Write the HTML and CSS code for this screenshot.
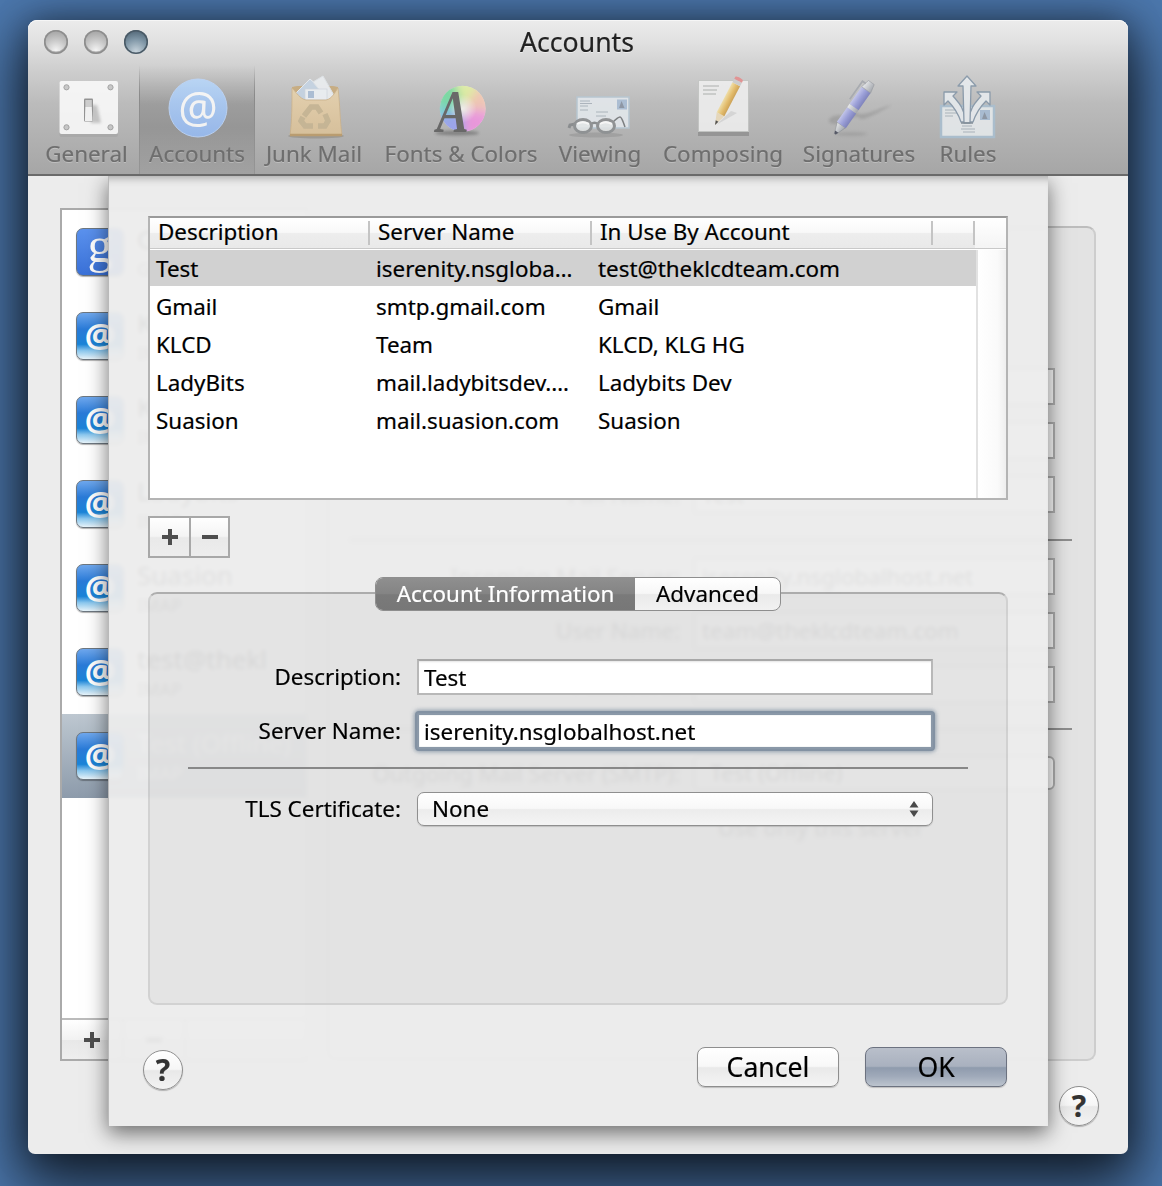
FILE: index.html
```html
<!DOCTYPE html>
<html lang="en">
<head>
<meta charset="utf-8">
<title>Accounts</title>
<link rel="stylesheet" href="styles.css">
</head>
<body>
<div class="window">
  <header class="toolbar">
    <div class="titlebar">
      <div class="lights"><span class="light"></span><span class="light"></span><span class="light light-active"></span></div>
      <div class="title">Accounts</div>
    </div>
    <nav class="tools">
      <div class="tool">
        <svg class="tool-icon" width="80" height="64" viewBox="0 0 80 64">
          <defs><filter id="sb" x="-50%" y="-50%" width="200%" height="200%"><feGaussianBlur stdDeviation="1.500"/></filter></defs>
          <rect x="12.500" y="7" width="58.500" height="55" rx="2" fill="#a8a8a8"/>
          <rect x="12.500" y="6" width="58.500" height="53" rx="2" fill="#fbfbfb"/>
          <g fill="#c9c9c9" stroke="#a0a0a0"><circle cx="19.500" cy="12.300" r="2.600"/><circle cx="63.500" cy="12.300" r="2.600"/><circle cx="19.500" cy="52.300" r="2.600"/><circle cx="63.500" cy="52.300" r="2.600"/></g>
          <path d="M42 30h8l4 18H44z" fill="#9a9a9a" opacity=".55" filter="url(#sb)"/>
          <rect x="37" y="23.500" width="9" height="23" rx="1" fill="#8e8e8e"/>
          <rect x="38.300" y="25" width="6.500" height="7" fill="#cfcfcf"/>
          <path d="M38.300 32h6.500l.7 14h-7.600z" fill="#f8f8f8"/>
        </svg>
        <span class="tool-label">General</span>
      </div>
      <div class="tool tool-on">
        <svg class="tool-icon" width="80" height="64" viewBox="0 0 80 64">
          <defs><linearGradient id="at" x1="0" y1="0" x2="0" y2="1"><stop offset="0" stop-color="#b8d8fc"/><stop offset="1" stop-color="#97bcf5"/></linearGradient></defs>
          <circle cx="41" cy="33" r="29" fill="url(#at)" stroke="#bcd6fb" stroke-width="1"/>
          <text class="svg-at" x="41" y="48" text-anchor="middle">@</text>
        </svg>
        <span class="tool-label">Accounts</span>
      </div>
      <div class="tool">
        <svg class="tool-icon" width="80" height="64" viewBox="0 0 80 64">
          <defs>
            <linearGradient id="bag" x1="0" y1="0" x2="0" y2="1"><stop offset="0" stop-color="#e8d3ad"/><stop offset="1" stop-color="#dcc298"/></linearGradient>
            <filter id="rb" x="-20%" y="-20%" width="140%" height="140%"><feGaussianBlur stdDeviation=".6"/></filter>
          </defs>
          <ellipse cx="42" cy="61" rx="28" ry="2.500" fill="#7d7668" opacity=".45"/>
          <path d="M18 12c6-2 40-2 46 0v15H18z" fill="#c8aa7b"/>
          <path d="M19 21L36 4l17 15-6 8H26z" fill="#c5d4e4" stroke="#e8edf2"/>
          <path d="M39 7L49 1l12 21-6 5z" fill="#eceff2" stroke="#dfe4e8"/>
          <rect x="31" y="14" width="22" height="11" fill="#eef2f6" stroke="#ced6df" stroke-width=".7"/>
          <rect x="34" y="16" width="6" height="7" fill="#a9bdd6"/>
          <path d="M18 13c4 4 8 11 14 12h20c6-1 9-8 12-12 2 16 2 34 4 47H16c2-13 2-31 2-47z" fill="url(#bag)" stroke="#cdb084" stroke-width=".8"/>
          <path d="M16 60h52" stroke="#bb9a68" stroke-width="2.500"/>
          <g fill="none" stroke="#c8b591" stroke-width="5.500" filter="url(#rb)"><path d="M30 41l7-9h6l4 6"/><path d="M51 39l3 7-3 5h-7"/><path d="M39 51h-8l-4-5 2-4"/></g>
        </svg>
        <span class="tool-label">Junk Mail</span>
      </div>
      <div class="tool">
        <svg class="tool-icon" width="80" height="64" viewBox="0 0 80 64">
          <defs>
            <clipPath id="wheel"><circle cx="41.700" cy="33.700" r="23"/></clipPath>
            <filter id="soft" x="-20%" y="-20%" width="140%" height="140%"><feGaussianBlur stdDeviation="5"/></filter>
            <filter id="soft2" x="-20%" y="-100%" width="140%" height="300%"><feGaussianBlur stdDeviation="1.500"/></filter>
            <radialGradient id="wc"><stop offset="0" stop-color="#fdfaf4" stop-opacity=".9"/><stop offset="1" stop-color="#fdfaf4" stop-opacity="0"/></radialGradient>
          </defs>
          <ellipse cx="36" cy="58" rx="22" ry="2.500" fill="#444" opacity=".5" filter="url(#soft2)"/>
          <g clip-path="url(#wheel)">
            <circle cx="41.700" cy="33.700" r="23" fill="#f2eee2"/>
            <g filter="url(#soft)">
              <path d="M42 34L14 30V6h20z" fill="#72dca0"/>
              <path d="M42 34L34 6h28z" fill="#e2f2a0"/>
              <path d="M42 34L62 6l10 30z" fill="#f6c6b2"/>
              <path d="M42 34l30 3-10 26H44z" fill="#f094e0"/>
              <path d="M42 34l2 29H18l-4-20z" fill="#98a2f2"/>
              <path d="M42 34L14 30v14z" fill="#6fd2d8"/>
            </g>
            <circle cx="41.700" cy="33.700" r="14" fill="url(#wc)"/>
          </g>
          <text class="svg-a" transform="translate(15.500 57) scale(.78 1)">A</text>
        </svg>
        <span class="tool-label">Fonts &amp; Colors</span>
      </div>
      <div class="tool">
        <svg class="tool-icon" width="80" height="64" viewBox="0 0 80 64">
          <ellipse cx="36" cy="60" rx="27" ry="2.500" fill="#6f6f6f" opacity=".3"/>
          <rect x="17" y="22" width="52" height="31" fill="#e4e9ed" stroke="#b6c7d4" stroke-width="1.500"/>
          <rect x="57" y="24.500" width="10" height="10" fill="#a9bed6"/>
          <path d="M59 33l2.500-7 3 7z" fill="#8893a2"/>
          <g stroke="#9aa6b0" stroke-width=".8"><path d="M20 26h10M20 28.500h12M20 31h8M20 35h8M36 37h12M36 41h10"/></g>
          <path d="M52 48c3-3 6-6 8-6s3 5 5 10" fill="none" stroke="#75787a" stroke-width="1.500"/>
          <path d="M15 49l-5 1-1 3" fill="none" stroke="#85888a" stroke-width="3"/>
          <path d="M31 49c2-1.500 5-1.500 7 0" fill="none" stroke="#85888a" stroke-width="2.500"/>
          <g fill="#e9ecec" fill-opacity=".85" stroke="#8b8e90" stroke-width="3"><ellipse cx="23" cy="51" rx="8.500" ry="6.500"/><ellipse cx="46" cy="51" rx="8.500" ry="6.500"/></g>
          <path d="M17 49c3-2 8-2 12 0M40 49c3-2 8-2 12 0" stroke="#fff" stroke-width="2" fill="none"/>
        </svg>
        <span class="tool-label">Viewing</span>
      </div>
      <div class="tool">
        <svg class="tool-icon" width="80" height="64" viewBox="0 0 80 64">
          <defs><linearGradient id="pc" x1="0" y1="0" x2="1" y2="0"><stop offset="0" stop-color="#f5e2a6"/><stop offset=".55" stop-color="#e9bd62"/><stop offset="1" stop-color="#cf9f4a"/></linearGradient></defs>
          <rect x="15" y="6" width="51" height="55" fill="#929292"/>
          <rect x="15.500" y="5.500" width="50" height="51" fill="#efefef" stroke="#c4c6c4"/>
          <g stroke="#a9adaa" stroke-width="1"><path d="M20 11h16M20 15h14M20 19h13"/></g>
          <path d="M33 50l15-14 6 2z" fill="#c9c9c9" opacity=".6"/>
          <g transform="rotate(27.500 32 50)">
            <path d="M32 50l-4.300-12h8.600z" fill="#ecdcbc"/>
            <path d="M32 50l-1.500-4.500h3z" fill="#444"/>
            <rect x="27.700" y="4" width="8.600" height="34" fill="url(#pc)"/>
            <rect x="27.700" y="0" width="8.600" height="4" fill="#cdcdcd"/>
            <path d="M27.700 0v-2c0-2 8.600-2 8.600 0v2z" fill="#e58d8d"/>
          </g>
        </svg>
        <span class="tool-label">Composing</span>
      </div>
      <div class="tool">
        <svg class="tool-icon" width="80" height="64" viewBox="0 0 80 64">
          <defs>
            <filter id="soft3" x="-20%" y="-60%" width="140%" height="220%"><feGaussianBlur stdDeviation="1.400"/></filter>
            <linearGradient id="penb" x1="0" y1="0" x2="1" y2="0"><stop offset="0" stop-color="#c4c7f0"/><stop offset=".5" stop-color="#979cdc"/><stop offset="1" stop-color="#777cbc"/></linearGradient>
            <linearGradient id="pens" x1="0" y1="0" x2="1" y2="0"><stop offset="0" stop-color="#eef0f2"/><stop offset="1" stop-color="#9fa3aa"/></linearGradient>
          </defs>
          <ellipse cx="32" cy="59" rx="16" ry="2" fill="#8a8a8a" opacity=".45" filter="url(#soft3)"/>
          <path d="M24 41c-6-2-13 1-14 4-1 4 7 5 12 3s8-5 14-6c5-1 4 3 8 2 8-2 18-8 29-14-10 2-20 8-29 9-6 1-7-3-11-3-4 0-5 3-9 5z" fill="#8b8b8b" opacity=".55" filter="url(#soft3)"/>
          <g transform="translate(16 59) rotate(35.200)">
            <path d="M-.8 0L-5 -11H5L.8 0z" fill="url(#pens)" stroke="#84878c" stroke-width=".5"/>
            <path d="M-.8 0L-2 -3H2L.8 0z" fill="#4a4d5c"/>
            <rect x="-5.500" y="-29" width="11" height="18" fill="url(#penb)"/>
            <rect x="-5.500" y="-33" width="11" height="4" fill="url(#pens)"/>
            <rect x="-5.500" y="-54" width="11" height="21" fill="url(#penb)"/>
            <path d="M-5.500 -54L-3.500 -63H3.500L5.500 -54z" fill="url(#pens)" stroke="#8b8e95" stroke-width=".5"/>
            <path d="M-4 -59h-4v22" fill="none" stroke="#a5a8ae" stroke-width="1.800"/>
          </g>
        </svg>
        <span class="tool-label">Signatures</span>
      </div>
      <div class="tool">
        <svg class="tool-icon" width="80" height="64" viewBox="0 0 80 64">
          <rect x="13" y="31" width="53" height="31" fill="#e6eaec" stroke="#a9bfd0" stroke-width="2.500"/>
          <rect x="52" y="35" width="10" height="10" fill="#a6bcd4"/>
          <path d="M54 44l2.500-7 3 7z" fill="#8893a2"/>
          <g stroke="#98a4ae" stroke-width=".8"><path d="M17 35h10M17 38h12M17 41h8M34 51h10M33 54h14M35 57h12"/></g>
          <g fill="#e8ecef" stroke="#8496a8" stroke-width="1.300" stroke-linejoin="round">
            <path d="M16 17h13l-4 4c5 6 11 11 13 26h-5c-3-9-8-16-13-21l-4 4z"/>
            <path d="M62 17H49l4 4c-5 6-11 11-13 26h5c3-9 8-16 13-21l4 4z"/>
            <path d="M39 1l9 10h-5l-1 37h-6l-1-37h-5z"/>
          </g>
          <path d="M33 48h12" stroke="#7d8994" stroke-width="1.500"/>
        </svg>
        <span class="tool-label">Rules</span>
      </div>
    </nav>
  </header>

  <main class="pane">
    <div class="rear">
      <div class="rear-list">
        <ul class="accounts">
          <li class="account"><span class="app-icon app-google"><svg width="48" height="48" viewBox="0 0 48 48"><text class="svg-g" x="24" y="34" text-anchor="middle">g</text></svg></span><span class="account-text"><b>Gmail</b><small>Google</small></span></li>
          <li class="account"><span class="app-icon"><svg width="48" height="48" viewBox="0 0 48 48"><text class="svg-at-small" x="24" y="36" text-anchor="middle">@</text></svg></span><span class="account-text"><b>KLCD</b><small>IMAP</small></span></li>
          <li class="account"><span class="app-icon"><svg width="48" height="48" viewBox="0 0 48 48"><text class="svg-at-small" x="24" y="36" text-anchor="middle">@</text></svg></span><span class="account-text"><b>KLG HG</b><small>IMAP</small></span></li>
          <li class="account"><span class="app-icon"><svg width="48" height="48" viewBox="0 0 48 48"><text class="svg-at-small" x="24" y="36" text-anchor="middle">@</text></svg></span><span class="account-text"><b>Ladybits</b><small>IMAP</small></span></li>
          <li class="account"><span class="app-icon"><svg width="48" height="48" viewBox="0 0 48 48"><text class="svg-at-small" x="24" y="36" text-anchor="middle">@</text></svg></span><span class="account-text"><b>Suasion</b><small>IMAP</small></span></li>
          <li class="account"><span class="app-icon"><svg width="48" height="48" viewBox="0 0 48 48"><text class="svg-at-small" x="24" y="36" text-anchor="middle">@</text></svg></span><span class="account-text"><b>test@thekl</b><small>IMAP</small></span></li>
          <li class="account account-on"><span class="app-icon"><svg width="48" height="48" viewBox="0 0 48 48"><text class="svg-at-small" x="24" y="36" text-anchor="middle">@</text></svg></span><span class="account-text"><b>Test (Offline)</b><small>IMAP</small></span></li>
        </ul>
        <div class="rear-actions"><span class="rear-action"><svg width="16" height="16" viewBox="0 0 16 16"><path d="M6 0h4v6h6v4h-6v6H6v-6H0V6h6z" fill="#4e4e4e"/></svg></span><span class="rear-action"><svg width="16" height="16" viewBox="0 0 16 16"><path d="M0 6h16v4H0z" fill="#4e4e4e"/></svg></span></div>
      </div>
      <div class="rear-detail">
        <div class="rear-tabs"><span>Account Information</span><span>Mailbox Behaviors</span><span>Advanced</span></div>
        <div class="rear-form">
          <label>Description:</label><div class="rear-field">Test</div>
          <label>Email Address:</label><div class="rear-field">test@theklcdteam.com</div>
          <label>Full Name:</label><div class="rear-field">Test</div>
          <div class="rear-sep rear-sep-one"></div>
          <label>Incoming Mail Server:</label><div class="rear-field">iserenity.nsglobalhost.net</div>
          <label>User Name:</label><div class="rear-field">team@theklcdteam.com</div>
          <label>Password:</label><div class="rear-field"></div>
          <div class="rear-sep rear-sep-two"></div>
          <label class="rear-pop-label">Outgoing Mail Server (SMTP):</label><div class="rear-field rear-pop">Test (Offline)</div>
          <label class="rear-check-label"></label><div class="rear-check">Use only this server</div>
        </div>
      </div>
    </div>
    <div class="rear-foot"><button class="help">?</button></div>

    <section class="sheet">
      <div class="table">
        <div class="thead">
          <div class="th">Description</div><div class="th">Server Name</div><div class="th">In Use By Account</div><div class="th"></div><div class="th th-end"></div>
        </div>
        <div class="tbody">
          <div class="rows">
            <div class="row row-on"><span>Test</span><span>iserenity.nsgloba…</span><span>test@theklcdteam.com</span></div>
            <div class="row"><span>Gmail</span><span>smtp.gmail.com</span><span>Gmail</span></div>
            <div class="row"><span>KLCD</span><span>Team</span><span>KLCD, KLG HG</span></div>
            <div class="row"><span>LadyBits</span><span>mail.ladybitsdev.…</span><span>Ladybits Dev</span></div>
            <div class="row"><span>Suasion</span><span>mail.suasion.com</span><span>Suasion</span></div>
          </div>
          <div class="scroller"></div>
        </div>
      </div>

      <div class="plusminus">
        <button class="pm"><svg width="16" height="16" viewBox="0 0 16 16"><path d="M6 0h4v6h6v4h-6v6H6v-6H0V6h6z" fill="#4e4e4e"/></svg></button>
        <button class="pm"><svg width="16" height="16" viewBox="0 0 16 16"><path d="M0 6h16v4H0z" fill="#4e4e4e"/></svg></button>
      </div>

      <div class="tabs"><span class="tab tab-on">Account Information</span><span class="tab">Advanced</span></div>
      <div class="tabbox">
        <div class="form">
          <label class="form-label">Description:</label>
          <div class="field">Test</div>
          <label class="form-label">Server Name:</label>
          <div class="field field-focus">iserenity.nsglobalhost.net</div>
          <div class="form-sep"></div>
          <label class="form-label">TLS Certificate:</label>
          <div class="popup"><span>None</span>
            <svg width="10" height="16" viewBox="0 0 10 16"><path d="M5 0l4.500 6.500h-9zM5 16L.5 9.500h9z" fill="#4a4a4a"/></svg>
          </div>
        </div>
      </div>

      <div class="sheet-foot">
        <button class="help">?</button>
        <div class="actions">
          <button class="btn">Cancel</button>
          <button class="btn btn-default">OK</button>
        </div>
      </div>
    </section>
  </main>
</div>
</body>
</html>
```

FILE: styles.css
```css
* { box-sizing: border-box; }
html, body { margin: 0; height: 100%; }
body {
  width: 1162px;
  height: 1186px;
  overflow: hidden;
  background: #4c78ae;
  font-family: "Noto Sans", "DejaVu Sans", sans-serif;
  font-size: 22.4px;
  color: #000;
  -webkit-text-stroke: .2px currentColor;
}
ul { list-style: none; margin: 0; padding: 0; }
button { font: inherit; color: inherit; padding: 0; }

.window {
  position: relative;
  width: 1100px;
  height: 1134px;
  margin: 20px 0 0 28px;
  background: #ececec;
  border-radius: 9px 9px 7px 7px;
  box-shadow: 0 26px 62px 10px rgba(0, 0, 0, .7), 0 0 32px rgba(0, 0, 0, .34);
  display: flex;
  flex-direction: column;
}

/* toolbar */
.toolbar {
  position: relative;
  z-index: 2;
  height: 156px;
  flex: none;
  border-radius: 9px 9px 0 0;
  border-bottom: 2px solid #6a6a6a;
  background: linear-gradient(#ececec 0, #e2e2e2 20px, #cdcdcd 52px, #bbb 84px, #a6a6a6 154px);
  box-shadow: inset 0 1px 0 #f6f6f6;
}
.titlebar { height: 45px; position: relative; }
.lights { position: absolute; left: 16px; top: 10px; display: flex; gap: 16px; }
.light {
  width: 24px;
  height: 24px;
  border-radius: 50%;
  background: radial-gradient(circle at 50% 85%, #f4f4f4 0, #c7c7c7 45%, #9e9e9e 90%);
  box-shadow: inset 0 0 0 1.5px #8d8d8d, inset 0 -1px 0 1.5px #aaa;
}
.light-active {
  background: radial-gradient(circle at 50% 90%, #c8d4dc 0, #7f96a6 50%, #4b6070 92%);
  box-shadow: inset 0 0 0 1.5px #4a5a66;
}
.title {
  position: absolute;
  left: 0;
  right: 0;
  top: 4px;
  text-align: center;
  font-size: 26.6px;
  line-height: 36px;
  color: #222;
  text-indent: -2px;
  text-shadow: 0 1px 0 rgba(255, 255, 255, .5);
}
.tools {
  display: grid;
  grid-template-columns: 105px 116px 118px 176px 102px 144px 128px 90px;
  padding-left: 6px;
  height: 109px;
}
.tool {
  display: flex;
  flex-direction: column;
  align-items: center;
  padding-top: 10px;
  min-width: 0;
}
.tool-icon { flex: none; display: block; opacity: .88; -webkit-text-stroke: 0; }
.tool-on {
  background: linear-gradient(rgba(0, 0, 0, 0) 0, rgba(0, 0, 0, .16) 40px, rgba(0, 0, 0, .17) 62px, rgba(0, 0, 0, .03) 109px);
  position: relative;
}
.tool-on::before, .tool-on::after {
  content: "";
  position: absolute;
  top: 0;
  bottom: 0;
  width: 1px;
  background: linear-gradient(rgba(110, 110, 110, 0), #8a8a8a 30px, #959595);
}
.tool-on::before { left: 0; }
.tool-on::after { right: 0; }
.tool-label {
  font-size: 22.4px;
  line-height: 30px;
  color: #6e6e6e;
  white-space: nowrap;
  text-shadow: 0 1px 0 rgba(255, 255, 255, .25);
}
.svg-at { font: 44px "Noto Sans", sans-serif; fill: #fff; }
.svg-a { font: italic bold 62px "Liberation Serif", serif; fill: #5e5e5e; }
.svg-g { font: 50px "Liberation Serif", serif; fill: #fff; -webkit-text-stroke: 0; }
.svg-at-small { font: bold 34px "Noto Sans", sans-serif; fill: #fff; -webkit-text-stroke: 0; }

/* window content behind the sheet */
.pane { position: relative; flex: 1; padding: 32px 32px 0; display: flex; flex-direction: column; }
.rear { display: flex; gap: 18px; height: 853px; }
.rear-list {
  width: 248px;
  flex: none;
  display: flex;
  flex-direction: column;
  background: #fff;
  border: 2px solid #aaa;
  border-right-color: #ccc;
}
.accounts { flex: 1; }
.account { height: 84px; display: flex; gap: 13px; padding: 18px 0 0 14px; }
.account-on { background: linear-gradient(#bdc7d0, #8d9bab); color: #fff; }
.app-icon {
  flex: none;
  width: 48px;
  height: 48px;
  border-radius: 7px;
  border: 1px solid #6d7780;
  background: linear-gradient(#6fa8ee 0, #2a7bd8 35%, #1a84d8 68%, #8cc8ee 82%, #e8f4fa 100%);
  box-shadow: 0 1px 1px rgba(0, 0, 0, .3);
}
.app-icon svg { display: block; margin: -1px; }
.app-google { background: linear-gradient(#5b92ee, #3a71d8); }
.account-text { display: flex; flex-direction: column; min-width: 0; margin-top: -8px; overflow: hidden; height: 72px; }
.account-text b { font-weight: 400; font-size: 26px; line-height: 38px; white-space: nowrap; color: #222; }
.account-text small { font-size: 18px; line-height: 22px; color: #666; }
.account-on .account-text b, .account-on .account-text small { color: #fff; }
.rear-actions {
  height: 41px;
  display: flex;
  border-top: 2px solid #bbb;
  background: linear-gradient(#fff, #f2f2f2 50%, #e8e8e8 52%, #eee);
}
.rear-action {
  width: 62px;
  display: flex;
  align-items: center;
  justify-content: center;
  border-right: 2px solid #bbb;
}
.rear-detail {
  flex: 1;
  margin-top: 18px;
  background: #e3e3e3;
  border: 2px solid #cdcdcd;
  border-top-color: #bdbdbd;
  border-radius: 9px;
  padding-left: 22px;
}
.rear-tabs {
  display: flex;
  height: 30px;
  margin: -13px 0 0 42px;
  width: 615px;
  background: #fff;
  border: 1px solid #aaa;
  border-radius: 8px;
  line-height: 28px;
  color: #222;
}
.rear-tabs span { flex: 1; text-align: center; white-space: nowrap; overflow: hidden; }
.rear-form {
  display: grid;
  grid-template-columns: 330px 361px;
  column-gap: 14px;
  row-gap: 17px;
  padding-top: 123px;
  align-items: center;
}
.rear-form label { text-align: right; color: #222; white-space: nowrap; }
.rear-field {
  height: 37px;
  background: #fff;
  border: 2px solid #b0b0b0;
  padding-left: 6px;
  line-height: 33px;
  color: #222;
  white-space: nowrap;
}
.rear-sep { grid-column: 1 / -1; height: 2px; background: #8d8d8d; width: 722px; }
.rear-sep-one { margin-top: 9px; }
.rear-sep-two { margin-top: 8px; }
.rear-pop { height: 34px; border-radius: 6px; margin-top: 9px; line-height: 30px; padding-left: 14px; }
.rear-pop-label { margin-top: 9px; }
.rear-check { color: #222; margin-top: 9px; line-height: 24px; padding-left: 24px; }
.rear-foot { display: flex; justify-content: flex-end; margin: 25px -3px 0 0; }

/* help */
.help {
  width: 40px;
  height: 40px;
  flex: none;
  border-radius: 50%;
  border: 1.5px solid #8e8e8e;
  background: linear-gradient(#fff 0, #f6f6f6 48%, #e8e8e8 52%, #f3f3f3 100%);
  box-shadow: 0 1px 1px rgba(0, 0, 0, .25);
  font-weight: 700;
  font-size: 30px;
  line-height: 36px;
  color: #333;
  text-align: center;
}

/* sheet */
.sheet {
  position: absolute;
  left: 80px;
  top: 0;
  width: 940px;
  height: 950px;
  padding: 40px 40px 0;
  background: rgba(236, 236, 236, .94);
  -webkit-backdrop-filter: blur(2px);
  backdrop-filter: blur(2px);
  box-shadow: 0 7px 20px rgba(0, 0, 0, .55), inset 1px 0 0 #b9b9b9, inset 0 9px 8px -7px rgba(0, 0, 0, .3);
}
.table {
  height: 283.5px;
  background: #fff;
  border: 2px solid #b4b4b4;
  border-top-color: #9a9a9a;
  display: flex;
  flex-direction: column;
}
.thead {
  flex: none;
  height: 31px;
  display: grid;
  grid-template-columns: 220px 222px 341px 42px 1fr;
  align-items: center;
  background: linear-gradient(#fff 0, #f8f8f8 48%, #ededed 52%, #e9e9e9 100%);
  border-bottom: 1px solid #c9c9c9;
}
.th {
  height: 24px;
  line-height: 22px;
  padding-left: 8px;
  border-right: 2px solid #c4c4c4;
  white-space: nowrap;
}
.th-end { border-right: none; background: linear-gradient(#fff, #f4f4f4); height: 100%; }
.tbody { flex: 1; display: flex; padding-top: 1px; min-height: 0; }
.rows { flex: 1; display: flex; flex-direction: column; gap: 2px; }
.row {
  height: 36px;
  display: grid;
  grid-template-columns: 220px 222px 1fr;
  align-items: center;
  line-height: 36px;
}
.row span { padding-left: 6px; white-space: nowrap; padding-top: 1px; }
.row-on { background: #d1d1d1; }
.scroller {
  width: 30px;
  flex: none;
  border-left: 2px solid #e2e2e2;
  background: linear-gradient(90deg, #fff, #fafafa 70%, #eee);
}
.plusminus {
  width: 82px;
  height: 42px;
  margin-top: 16.5px;
  display: flex;
  border: 2px solid #a8a8a8;
  background: linear-gradient(#fff 0, #f4f4f4 48%, #e9e9e9 52%, #ededed 100%);
}
.pm {
  flex: none;
  width: 39px;
  border: none;
  background: none;
  display: flex;
  align-items: center;
  justify-content: center;
}
.pm + .pm { flex: 1; border-left: 2px solid #a8a8a8; }
.tabs {
  position: relative;
  z-index: 1;
  margin: 19px 0 0 227px;
  width: 406px;
  height: 34px;
  display: flex;
  border-radius: 8px;
  border: 1.5px solid #8e8e8e;
  background: linear-gradient(#fff 0, #f7f7f7 48%, #eaeaea 52%, #f2f2f2 100%);
  overflow: hidden;
}
.tab { flex: 1; text-align: center; line-height: 31px; white-space: nowrap; }
.tab-on {
  flex: none;
  width: 259px;
  color: #fff;
  background: linear-gradient(#8f8f8f 0, #848484 50%, #7a7a7a 52%, #777 100%);
}
.tabbox {
  height: 413px;
  margin-top: -19px;
  background: rgba(0, 0, 0, .04);
  border: 2px solid rgba(0, 0, 0, .08);
  border-top-color: rgba(0, 0, 0, .24);
  border-radius: 9px;
  padding: 65px 38px 0;
}
.form {
  display: grid;
  grid-template-columns: 213px 516px;
  column-gap: 16px;
  row-gap: 18px;
  align-items: center;
}
.form-label { text-align: right; white-space: nowrap; line-height: 36px; }
.field {
  height: 36px;
  background: #fff;
  border: 2px solid #b8b8b8;
  border-top-color: #a8a8a8;
  padding-left: 5px;
  line-height: 34px;
  white-space: nowrap;
  box-shadow: inset 0 2px 2px -1px #e4e4e4;
}
.field-focus {
  border-color: #8a98a8;
  border-radius: 2px;
  box-shadow: 0 0 0 2px #8392a3, 0 0 4px 3px rgba(110, 130, 150, .7), inset 0 0 1px #9aa;
}
.form-sep { grid-column: 1 / -1; height: 2px; margin-bottom: 4px; width: 780px; background: #888; }
.popup {
  height: 34px;
  display: flex;
  align-items: center;
  justify-content: space-between;
  padding: 0 13px 0 14px;
  border: 1.5px solid #8f8f8f;
  border-radius: 7px;
  background: linear-gradient(#fff 0, #f8f8f8 48%, #ececec 52%, #f4f4f4 100%);
  box-shadow: 0 1px 1px rgba(0, 0, 0, .15);
  line-height: 30px;
}
.sheet-foot {
  display: flex;
  justify-content: space-between;
  align-items: flex-start;
  margin: 42px 1px 0 -5px;
}
.sheet-foot .help { margin-top: 3px; }
.actions { display: flex; gap: 26px; }
.btn {
  width: 142px;
  height: 40px;
  border-radius: 8px;
  border: 1.5px solid #8e8e8e;
  background: linear-gradient(#fff 0, #f8f8f8 48%, #e9e9e9 52%, #f4f4f4 100%);
  box-shadow: 0 1px 1px rgba(0, 0, 0, .2);
  font-size: 26.6px;
  line-height: 36px;
  text-align: center;
}
.btn-default {
  border-color: #6c7280;
  background: linear-gradient(#b9bfca 0, #a9b1bf 48%, #8f9bad 52%, #a0aaba 75%, #bcc4ce 100%);
}
```
